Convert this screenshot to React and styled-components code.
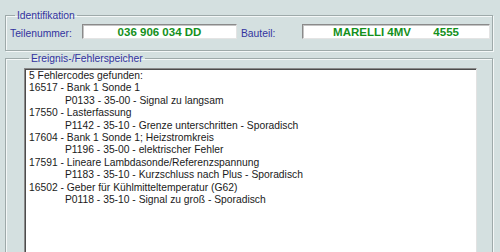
import React from 'react'
import styled, { createGlobalStyle } from 'styled-components'

const Global = createGlobalStyle`
html, body {
  margin: 0;
  padding: 0;
  background: #d4e0e0;
  overflow: hidden;
}
`

const Main = styled.div`
width: 500px;
height: 252px;
box-sizing: border-box;
padding: 9px 7px 0 5px;
background: #d4e0e0;
font-family: "Liberation Sans", Arial, sans-serif;
font-size: 10.3px;
overflow: hidden;
display: flex;
flex-direction: column;
gap: 1px;
`

const Group = styled.fieldset`
margin: 0;
padding: ${p => p.$pad};
border: 1px solid #9eaaaa;
box-shadow: inset 1px 1px 0 #f4f8f8, 1px 1px 0 #f4f8f8;
min-width: 0;
flex: ${p => (p.$grow ? '1' : 'none')};
legend {
  margin-left: 5px;
  padding: 0 2px;
  line-height: 13px;
  color: #33339f;
}
`

const IdRow = styled.div`
display: grid;
grid-template-columns: 72px 155px 65px 188px;
align-items: start;
`

const Label = styled.span`
color: #33339f;
padding-top: 2px;
padding-left: ${p => p.$indent || 0}px;
line-height: 15px;
`

const Field = styled.div`
height: 15px;
box-sizing: border-box;
background: #fff;
border: 1px solid;
border-color: #8a8a8a #e4e4e4 #e4e4e4 #8a8a8a;
box-shadow: inset 1px 1px 0 #c4c4c4;
padding-top: 1px;
line-height: 12px;
text-align: center;
white-space: pre;
color: #14901c;
font-weight: bold;
font-size: 11.5px;
`

const List = styled.div`
height: 186px;
box-sizing: border-box;
background: #fff;
border: 1px solid;
border-color: #8a8a8a #e2e2e2 #e2e2e2 #8a8a8a;
box-shadow: inset 1px 1px 0 #4c4c4c;
padding: 1px 0 0 4px;
line-height: 12.4px;
color: #1a1a1a;
`

const Line = styled.div`
white-space: pre;
padding-left: ${p => (p.$sub ? 36 : 0)}px;
`

const codes = [
  ['16517 - Bank 1 Sonde 1', 'P0133 - 35-00 - Signal zu langsam'],
  ['17550 - Lasterfassung', 'P1142 - 35-10 - Grenze unterschritten - Sporadisch'],
  ['17604 - Bank 1 Sonde 1; Heizstromkreis', 'P1196 - 35-00 - elektrischer Fehler'],
  ['17591 - Lineare Lambdasonde/Referenzspannung', 'P1183 - 35-10 - Kurzschluss nach Plus - Sporadisch'],
  ['16502 - Geber für Kühlmitteltemperatur (G62)', 'P0118 - 35-10 - Signal zu groß - Sporadisch'],
]

const App = () => {
  return (
    <Main>
      <Global />
      <Group $pad="2px 0 9px 4px">
        <legend>Identifikation</legend>
        <IdRow>
          <Label>Teilenummer:</Label>
          <Field>036 906 034 DD</Field>
          <Label $indent={4}>Bauteil:</Label>
          <Field>{'MARELLI 4MV       4555'}</Field>
        </IdRow>
      </Group>
      <Group $grow $pad="3px 15px 0 18px">
        <legend>Ereignis-/Fehlerspeicher</legend>
        <List>
          <Line>5 Fehlercodes gefunden:</Line>
          {codes.map(([head, sub]) => (
            <React.Fragment key={head}>
              <Line>{head}</Line>
              <Line $sub>{sub}</Line>
            </React.Fragment>
          ))}
        </List>
      </Group>
    </Main>
  )
}

export default App
